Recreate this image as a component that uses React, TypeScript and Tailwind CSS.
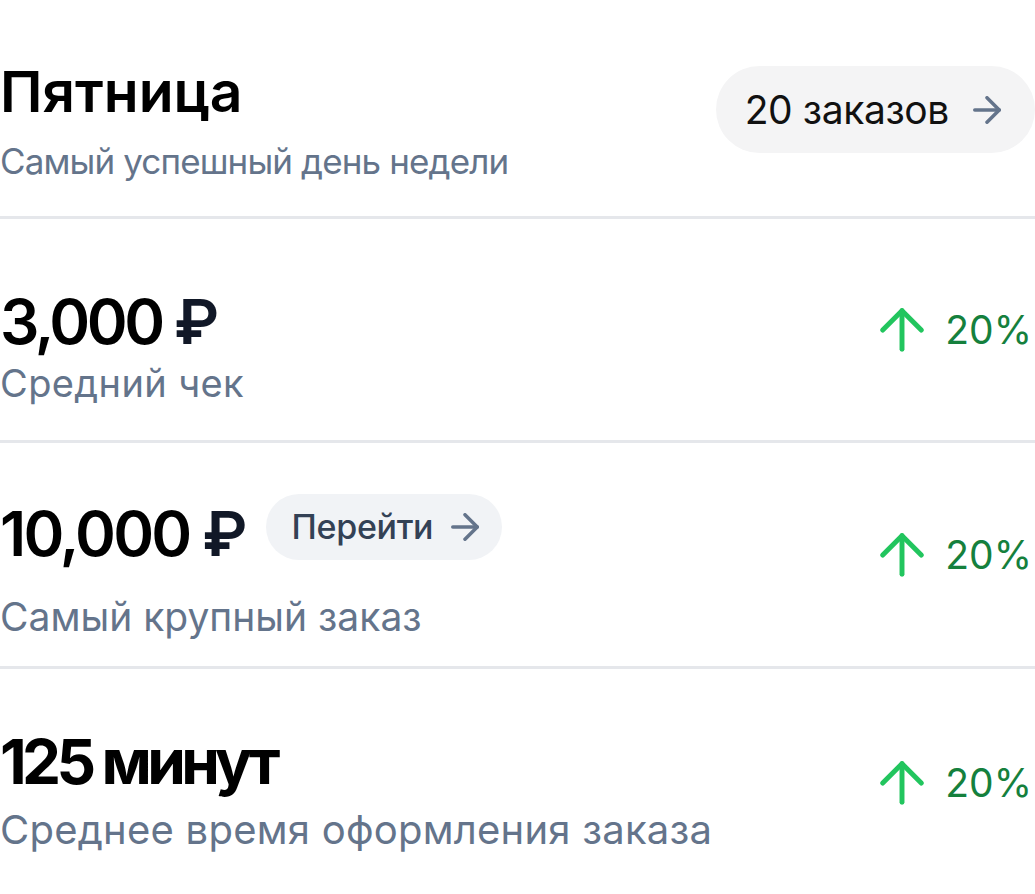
import { ReactNode } from "react";

const ArrowRight = ({ className }: { className?: string }) => (
    <svg className={className} width="28" height="28" viewBox="4 4 16 16" fill="none" stroke="currentColor" strokeWidth="2" strokeLinecap="round" strokeLinejoin="round">
        <path d="M5 12h14" />
        <path d="m12 5 7 7-7 7" />
    </svg>
);

const ArrowUp = () => (
    <svg width="44" height="44" viewBox="4 4 16 16" fill="none" stroke="currentColor" strokeWidth="1.8" strokeLinecap="round" strokeLinejoin="round" className="text-[#22c55e]">
        <path d="m5 12 7-7 7 7" />
        <path d="M12 19V5" />
    </svg>
);

const Growth = () => (
    <div className="flex items-center gap-[21px] pr-[3px]">
        <ArrowUp />
        <span className="text-[39px] leading-none text-[#15803d]">20%</span>
    </div>
);

interface StatRowProps {
    value: ReactNode;
    label: string;
    labelClass: string;
    top: string;
    bottom: string;
}

const StatRow = ({ value, label, labelClass, top, bottom }: StatRowProps) => (
    <div className="flex items-center justify-between border-b-[3px] border-[#e5e7eb] last:border-b-0">
        <div className={`flex flex-col ${top} ${bottom}`}>
            {value}
            <span className={`leading-none text-[#64748b] ${labelClass}`}>{label}</span>
        </div>
        <Growth />
    </div>
);

const Rub = () => <span className="text-[#111827]">₽</span>;

export default function App() {
    return (
        <div className="w-[1035px] h-[894px] bg-white overflow-hidden font-['Inter',sans-serif]">
            <header className="flex items-start justify-between pt-[63px] pb-[37px] border-b-[3px] border-[#e5e7eb]">
                <div className="flex flex-col gap-[24px]">
                    <h1 className="text-[57px] leading-none font-semibold text-black">Пятница</h1>
                    <p className="text-[35px] leading-none text-[#64748b] tracking-[-0.025em]">Самый успешный день недели</p>
                </div>
                <button className="mt-[3px] flex items-center gap-[24px] h-[87px] pl-[29px] pr-[34px] rounded-full bg-[#f4f4f5]">
                    <span className="text-[39px] leading-none text-[#111] tracking-[-0.01em]">20 заказов</span>
                    <ArrowRight className="text-[#64748b]" />
                </button>
            </header>

            <StatRow
                top="pt-[72px]"
                bottom="pb-[38px]"
                label="Средний чек"
                labelClass="text-[38px] tracking-[0.01em]"
                value={
                    <span className="mb-[11px] text-[62px] leading-none font-semibold text-black tracking-[-0.055em]">
                        3,000 <Rub />
                    </span>
                }
            />

            <StatRow
                top="pt-[51px]"
                bottom="pb-[30px]"
                label="Самый крупный заказ"
                labelClass="text-[39px]"
                value={
                    <div className="mb-[32px] flex items-start gap-[21px]">
                        <span className="mt-[9px] text-[62px] leading-none font-semibold text-black tracking-[-0.045em]">
                            10,000 <Rub />
                        </span>
                        <button className="flex items-center gap-[18px] h-[66px] pl-[26px] pr-[23px] rounded-full bg-[#f1f3f6]">
                            <span className="text-[34px] leading-none font-medium text-[#334155] tracking-[-0.01em]">Перейти</span>
                            <ArrowRight className="text-[#64748b]" />
                        </button>
                    </div>
                }
            />

            <StatRow
                top="pt-[62px]"
                bottom="pb-[46px]"
                label="Среднее время оформления заказа"
                labelClass="text-[40px] tracking-[0.006em]"
                value={
                    <span className="mb-[17px] text-[62px] leading-none font-bold text-black tracking-[-0.075em]">
                        125 минут
                    </span>
                }
            />
        </div>
    );
}
